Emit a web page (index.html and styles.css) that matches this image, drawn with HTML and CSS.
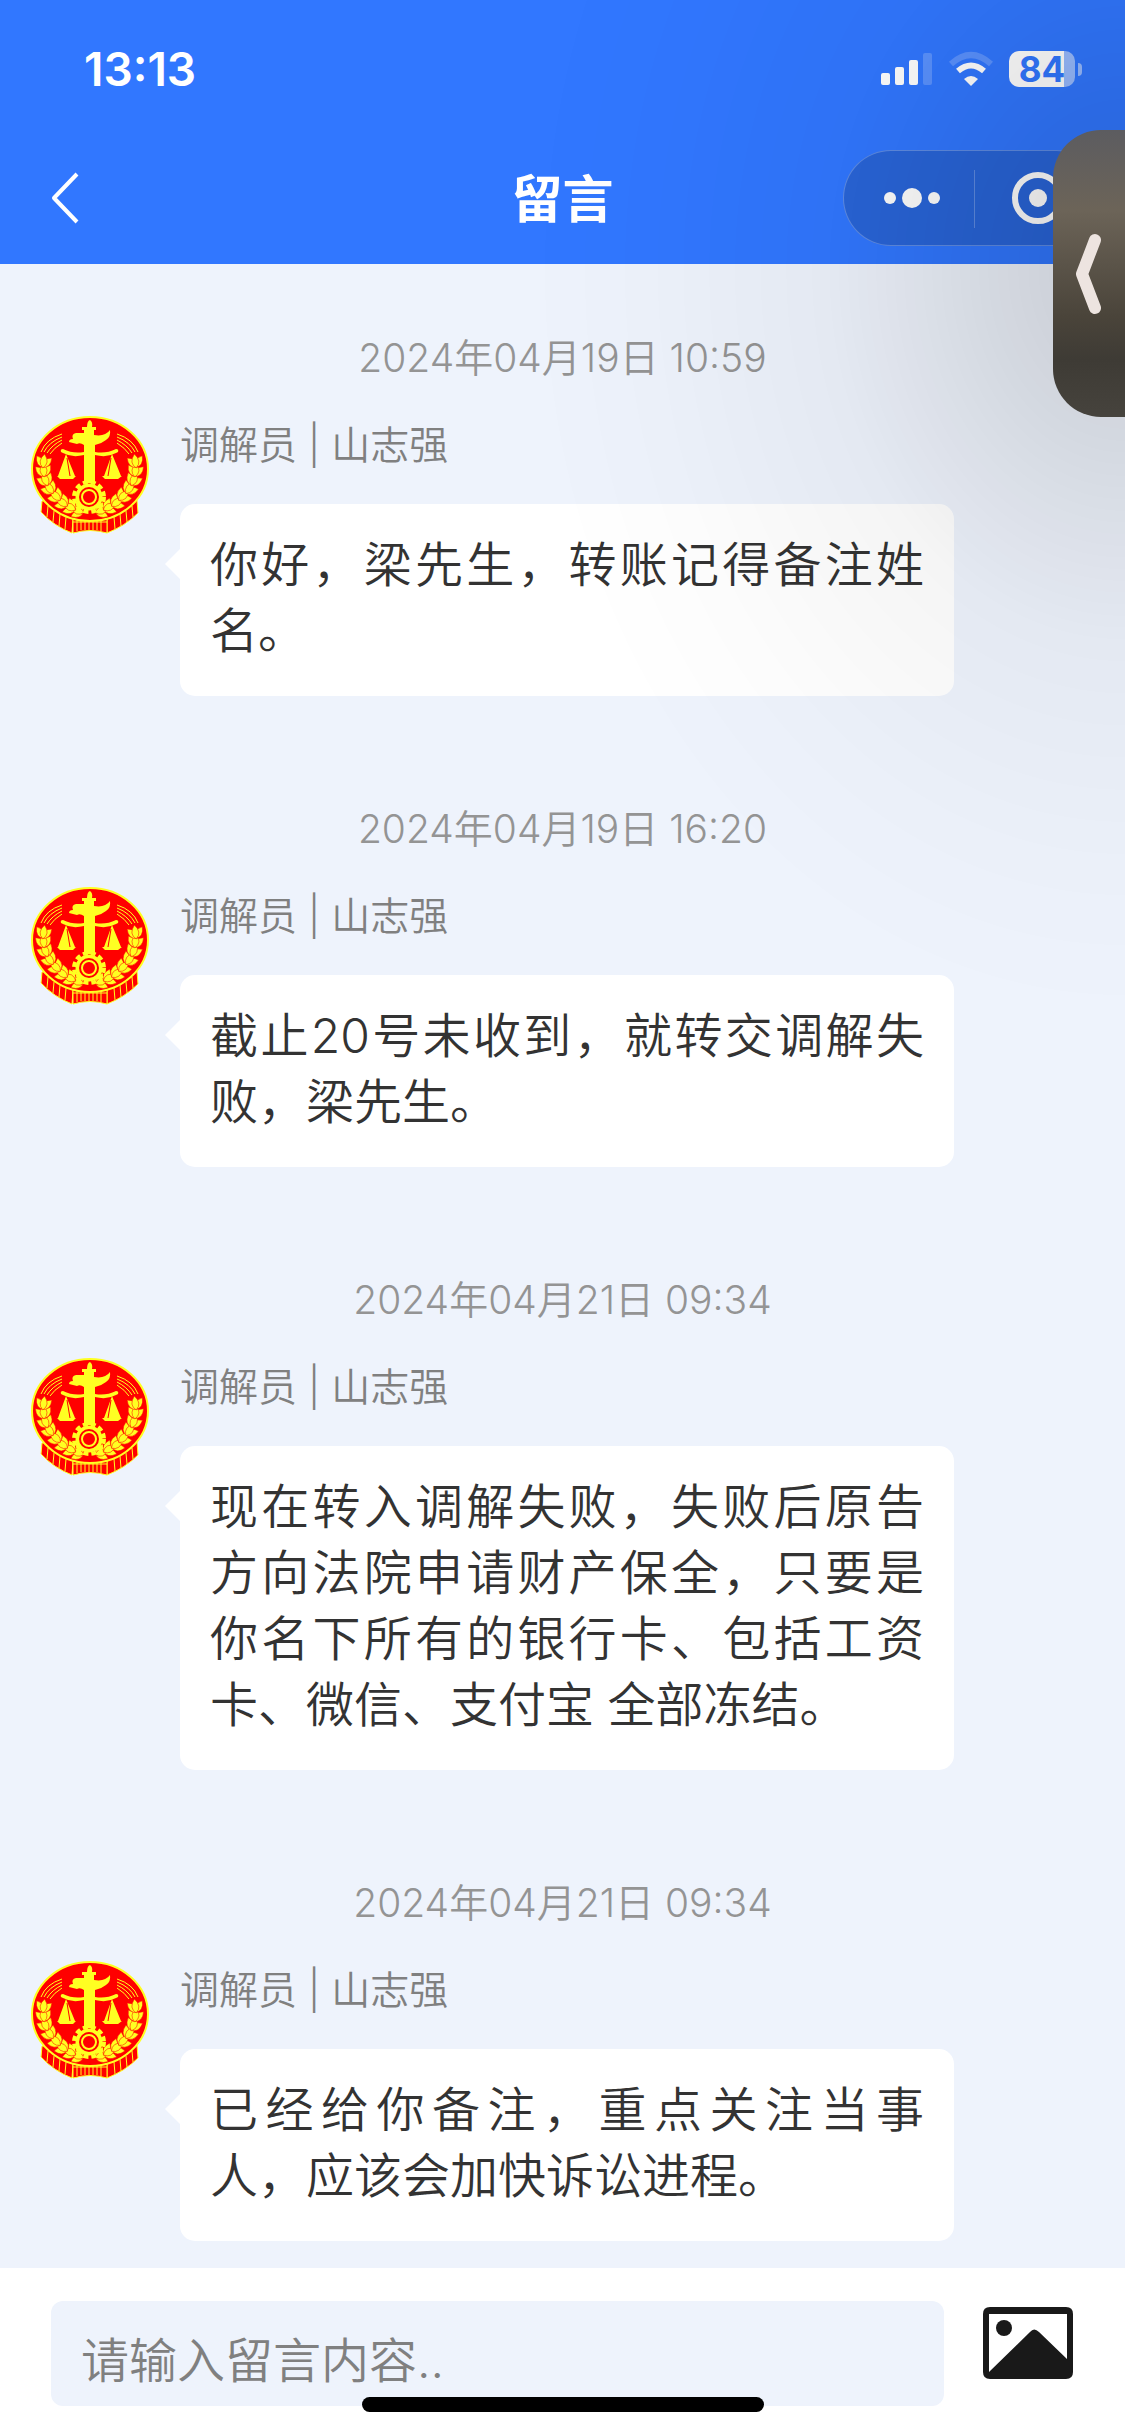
FILE: index.html
```html
<!DOCTYPE html>
<html lang="zh-CN">
<head>
    <meta charset="UTF-8">
    <meta name="viewport" content="width=device-width, initial-scale=1">
    <title>留言</title>
    <link rel="stylesheet" href="styles.css">
</head>
<body>
    <!-- 徽章图形，四条消息共用 -->
    <svg class="defs" aria-hidden="true">
        <defs>
            <path id="grain" d="M0 2Q-7 -4 0 -12Q7 -4 0 2Z"/>
            <g id="grains">
                <use href="#grain" transform="rotate(-40)"/>
                <use href="#grain" transform="rotate(40)"/>
                <use href="#grain"/>
            </g>
            <g id="wheat" fill="#ff2" stroke="#f00" stroke-width=".5">
                <use href="#grains" transform="translate(52 97) rotate(-72)"/>
                <use href="#grains" transform="translate(44 94) rotate(-64)"/>
                <use href="#grains" transform="translate(36 90) rotate(-55)"/>
                <use href="#grains" transform="translate(29 84) rotate(-46)"/>
                <use href="#grains" transform="translate(22 77) rotate(-35)"/>
                <use href="#grains" transform="translate(17 69) rotate(-22)"/>
                <use href="#grains" transform="translate(14 60) rotate(-6)"/>
                <use href="#grains" transform="translate(13 51) rotate(8)"/>
            </g>
            <symbol id="emblem" viewBox="0 0 120 120">
                <path d="M12 86L11 97Q24 111 42 118L43 104L77 104V118Q95 111 108 98L107 85Z" fill="#f00" stroke="#ff2" stroke-width="1"/>
                <path d="M18 91L17 102M24 96L23 107M30 99L29 111M36 102L35 114M102 91L103 102M96 96L97 107M90 99L91 111M84 102L85 114" stroke="#ff2" stroke-width="1" fill="none"/>
                <path d="M43 103H77V118Q60 113 43 118Z" fill="#f00" stroke="#ff2" stroke-width="1"/>
                <path d="M47 105V116M51 105V115M55 106V115M59 106V115M63 106V115M67 106V115M71 105V116M43 107L77 107" stroke="#ff2" stroke-width="1"/>
                <ellipse cx="60" cy="54" rx="58" ry="52" fill="#f00" stroke="#ff2" stroke-width="2"/>
                <use href="#wheat"/>
                <use href="#wheat" transform="translate(119) scale(-1 1)"/>
                <g fill="#ff2">
                    <path d="M57 12Q57 6 60 5Q63 7 62 12H66V15H64V20Q75 22 80 15Q81 22 76 25Q71 29 65 30V68H54V30Q50 27 47 29L39 27Q39 24 43 24Q41 19 46 18H54V15H52V12Z"/>
                    <path d="M31 37Q30 34 33 34Q43 39 54 37V40Q42 43 33 38ZM88 37Q89 34 86 34Q76 39 65 37V40Q77 43 86 38Z"/>
                    <path d="M36 39L28 61H45ZM82 39L74 61H91Z"/>
                    <path d="M27 61H46L43 64H30ZM72 61H92L88 64H75Z"/>
                    <path d="M37 43L40 61M81 43L78 61" stroke="#f00" stroke-width="1"/>
                </g>
                <circle cx="59" cy="82" r="15" fill="none" stroke="#ff2" stroke-width="4" stroke-dasharray="5 3"/>
                <circle cx="59" cy="82" r="12" fill="#ff2" stroke="#ff2" stroke-width="3"/>
                <circle cx="59" cy="82" r="10" fill="#f00"/>
                <circle cx="59" cy="82" r="7" fill="#f00" stroke="#ff2" stroke-width="2"/>
                <path d="M11 37Q16 24 32 19M14 37Q19 27 32 22M17 38Q22 30 32 25M20 39Q24 33 32 28M108 37Q103 24 87 19M105 37Q100 27 87 22M102 38Q97 30 87 25M99 39Q95 33 87 28" stroke="#ff2" stroke-width="1" fill="none"/>
            </symbol>
        </defs>
    </svg>

    <div class="page">
        <header class="top">
            <div class="status">
                <span class="time">13:13</span>
                <div class="status-icons">
                    <svg width="52" height="36" viewBox="0 0 52 36" fill="#fff">
                        <rect x="0" y="22" width="9" height="12" rx="2"/>
                        <rect x="14" y="16" width="9" height="18" rx="2"/>
                        <rect x="28" y="9" width="9" height="25" rx="2"/>
                        <rect x="42" y="2" width="9" height="32" rx="2" opacity=".2"/>
                    </svg>
                    <svg width="46" height="36" viewBox="0 0 46 36" fill="none" stroke="#fff" stroke-width="6">
                        <path d="M3 13Q23 -5 43 13" opacity=".2"/>
                        <path d="M10 20Q23 9 36 20"/>
                        <path d="M16 28Q23 22 30 28L23 35Z" fill="#fff" stroke="none"/>
                    </svg>
                    <div class="battery"><span>84</span></div>
                </div>
            </div>
            <div class="nav">
                <button class="back" aria-label="返回">
                    <svg width="30" height="54" viewBox="0 0 30 54" fill="none" stroke="#fff" stroke-width="4" stroke-linejoin="round">
                        <path d="M27 3L4 27L27 51"/>
                    </svg>
                </button>
                <h1>留言</h1>
                <div class="capsule">
                    <button aria-label="更多">
                        <svg width="58" height="20" viewBox="0 0 58 20" fill="#fff">
                            <circle cx="7" cy="10" r="6"/>
                            <circle cx="29" cy="10" r="10"/>
                            <circle cx="51" cy="10" r="6"/>
                        </svg>
                    </button>
                    <button aria-label="关闭">
                        <svg width="54" height="54" viewBox="0 0 54 54">
                            <circle cx="27" cy="27" r="23" fill="none" stroke="#fff" stroke-width="6"/>
                            <circle cx="27" cy="27" r="9" fill="#fff"/>
                        </svg>
                    </button>
                </div>
            </div>
        </header>

        <main class="chat">
            <section class="msg">
                <time>2024年04月19日 10:59</time>
                <div class="row">
                    <svg class="avatar"><use href="#emblem"/></svg>
                    <div class="body">
                        <div class="name">调解员 | 山志强</div>
                        <p class="bubble">你好，梁先生，转账记得备注姓名。</p>
                    </div>
                </div>
            </section>
            <section class="msg">
                <time>2024年04月19日 16:20</time>
                <div class="row">
                    <svg class="avatar"><use href="#emblem"/></svg>
                    <div class="body">
                        <div class="name">调解员 | 山志强</div>
                        <p class="bubble">截止20号未收到，就转交调解失败，梁先生。</p>
                    </div>
                </div>
            </section>
            <section class="msg">
                <time>2024年04月21日 09:34</time>
                <div class="row">
                    <svg class="avatar"><use href="#emblem"/></svg>
                    <div class="body">
                        <div class="name">调解员 | 山志强</div>
                        <p class="bubble">现在转入调解失败，失败后原告方向法院申请财产保全，只要是你名下所有的银行卡、包括工资卡、微信、支付宝 全部冻结。</p>
                    </div>
                </div>
            </section>
            <section class="msg">
                <time>2024年04月21日 09:34</time>
                <div class="row">
                    <svg class="avatar"><use href="#emblem"/></svg>
                    <div class="body">
                        <div class="name">调解员 | 山志强</div>
                        <p class="bubble">已经给你备注，重点关注当事人，应该会加快诉讼进程。</p>
                    </div>
                </div>
            </section>
        </main>

        <footer class="send">
            <input type="text" placeholder="请输入留言内容.." aria-label="留言内容">
            <button aria-label="发送图片">
                <svg width="90" height="72" viewBox="0 0 90 72" fill="#191919">
                    <path fill-rule="evenodd" d="M7 0H83Q90 0 90 7V65Q90 72 83 72H7Q0 72 0 65V7Q0 0 7 0ZM6 7V65L47 25Q51 20 56 25L84 52V7Z"/>
                    <circle cx="21" cy="21" r="8"/>
                </svg>
            </button>
        </footer>
    </div>

    <div class="shade"></div>
    <button class="drawer" aria-label="展开">
        <svg width="30" height="84" viewBox="0 0 30 84" fill="none" stroke="#ede4e0" stroke-width="12" stroke-linecap="round" stroke-linejoin="round">
            <path d="M21 8L8 42L21 76"/>
        </svg>
    </button>
    <div class="home-bar"></div>
</body>
</html>
```

FILE: styles.css
```css
*{
    margin:0;padding:0;
    box-sizing: border-box;
}
html,body{
    height:100%;
}
body{
    font-family: Inter,"Noto Sans CJK SC",sans-serif;
    font-weight: 350;
    background-color: #eef3fc;
    color:#333;
    overflow: hidden;
}
button{
    border:none;
    background:none;
}
svg{
    display: block;
}
.defs{
    position: absolute;
    width:0;
    height:0;
}
.page{
    display: flex;
    flex-direction: column;
    height:100%;
}

/* 顶部 */
.top{
    background-color: #3177ff;
    color:#fff;
}
.status{
    display: flex;
    justify-content: space-between;
    align-items: center;
    height:132px;
    padding:6px 43px 0 84px;
}
.time{
    font-size: 46px;
    font-weight: 600;
}
.status-icons{
    display: flex;
    align-items: center;
    gap:15px;
}
.battery{
    position: relative;
    width:66px;
    height:36px;
    margin-right: 7px;
    border-radius: 10px;
    background: linear-gradient(90deg,#fff 55px,rgba(255,255,255,.5) 55px);
    color:#3177ff;
    font-size: 35px;
    font-weight: 700;
    line-height: 36px;
    text-align: center;
}
.battery:after{
    content:"";
    position: absolute;
    right:-7px;
    top:12px;
    width:4px;
    height:13px;
    border-radius: 0 6px 6px 0;
    background-color: rgba(255,255,255,.5);
}
.nav{
    display: grid;
    grid-template-columns: 1fr auto 1fr;
    align-items: center;
    height:132px;
    padding:0 21px;
}
.back{
    justify-self: start;
    padding-left: 29px;
}
h1{
    padding-bottom: 4px;
    font-size: 51px;
    font-weight: 700;
}
.capsule{
    display: flex;
    justify-self: end;
    width:261px;
    height:96px;
    border:1px solid rgba(255,255,255,.25);
    border-radius: 48px;
    background-color: rgba(0,0,0,.15);
}
.capsule button{
    position: relative;
    width:50%;
    display: flex;
    align-items: center;
    justify-content: center;
}
.capsule button:first-child{
    padding-left: 6px;
}
.capsule button + button:before{
    content:"";
    position: absolute;
    left:0;
    top:19px;
    width:1px;
    height:58px;
    background-color: rgba(255,255,255,.25);
}

/* 消息列表 */
.chat{
    flex:1;
    display: flex;
    flex-direction: column;
    gap:103px;
    padding:64px 30px 27px;
}
.msg time{
    display: block;
    font-size: 39px;
    line-height: 60px;
    text-align: center;
    color:#949494;
}
.row{
    display: flex;
    gap:30px;
    margin-top: 27px;
}
.avatar{
    flex:none;
    width:120px;
    height:120px;
}
.name{
    font-size: 39px;
    line-height: 60px;
    color:#808080;
}
.bubble{
    position: relative;
    max-width: 774px;
    margin-top: 29px;
    padding:28px 30px 32px;
    border-radius: 15px;
    background-color: #fff;
    font-size: 48px;
    line-height: 66px;
    text-align: justify;
}
.bubble:before{
    content:"";
    position: absolute;
    left:-15px;
    top:45px;
    border:15px solid transparent;
    border-left: none;
    border-right-color: #fff;
}

/* 输入栏 */
.send{
    display: flex;
    align-items: flex-start;
    gap:39px;
    height:168px;
    padding:33px 52px 0 51px;
    background-color: #fff;
}
.send input{
    flex:1;
    min-width: 0;
    height:105px;
    padding:14px 30px 0;
    border:none;
    border-radius: 12px;
    background-color: #eef3fc;
    font-family: inherit;
    font-size: 48px;
    font-weight: inherit;
}
.send input::placeholder{
    color:#808080;
}
.send button{
    margin-top: 6px;
}

/* 浮层 */
.shade{
    position: fixed;
    top:0;
    right:0;
    width:600px;
    height:1050px;
    background: radial-gradient(ellipse 600px 750px at 100% 270px,rgba(0,0,0,.16),rgba(0,0,0,.11) 22%,rgba(0,0,0,.04) 50%,rgba(0,0,0,.01) 80%,transparent);
    pointer-events: none;
}
.drawer{
    position: fixed;
    top:130px;
    right:0;
    width:72px;
    height:287px;
    padding-left: 21px;
    border-radius: 48px 0 0 48px;
    background: linear-gradient(180deg,#5c5c60,#6c6458 28%,#4a443a 65%,#3e3b35 80%,#46433d);
}
.home-bar{
    position: fixed;
    left:50%;
    bottom:24px;
    width:402px;
    height:15px;
    border-radius: 8px;
    background-color: #000;
    transform: translateX(-50%);
}
```
